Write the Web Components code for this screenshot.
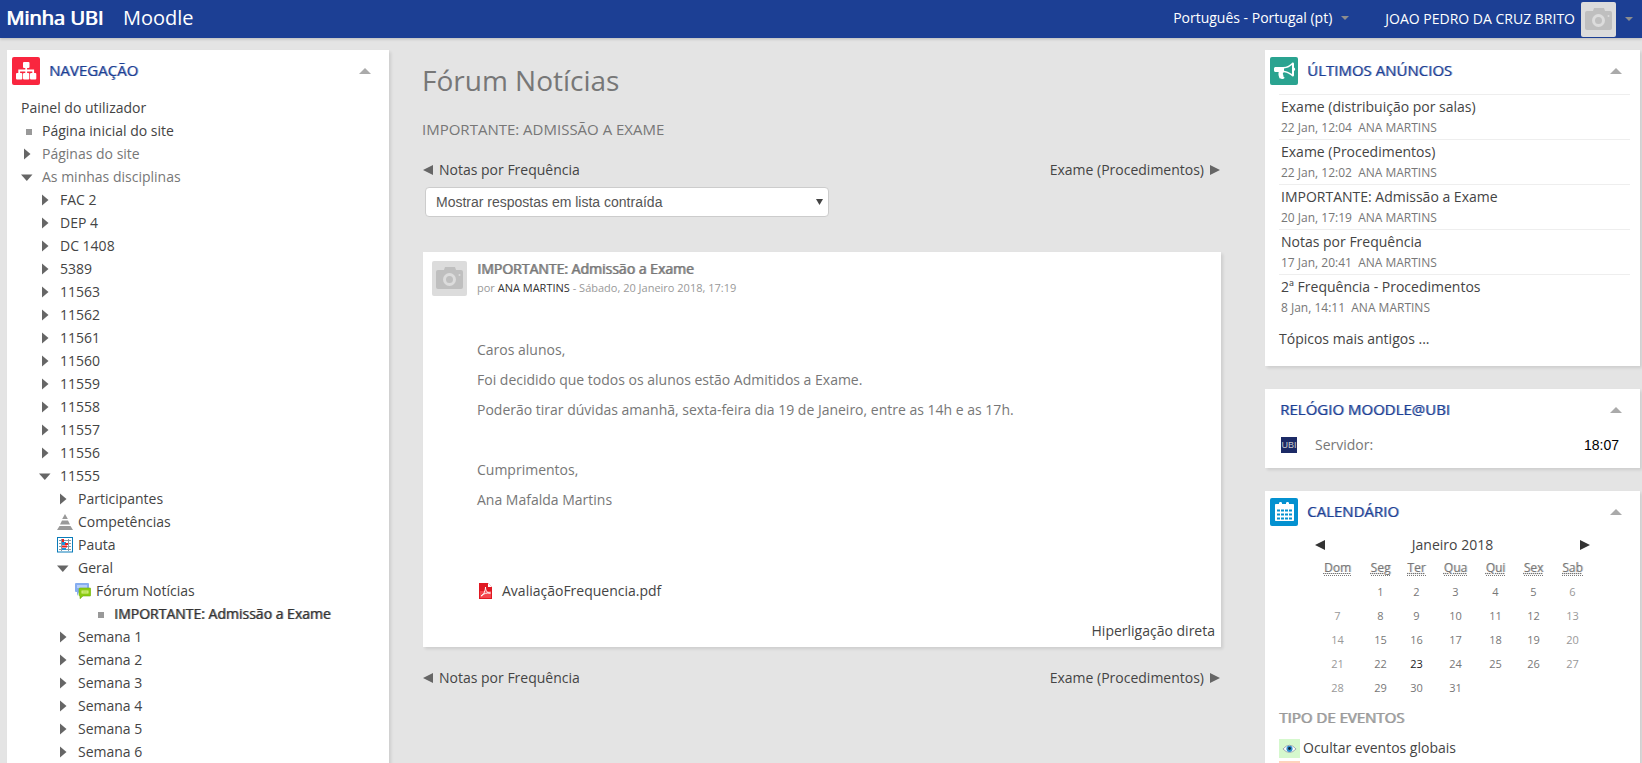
<!DOCTYPE html>
<html lang="pt">
<head>
<meta charset="utf-8">
<title>Fórum Notícias</title>
<style>
  html { height: 100%; }
  body { margin: 0; height: 100%; overflow: hidden; background: #e4e4e4; color: #777; font: 14px/20px "Open Sans", sans-serif; }
</style>
</head>
<body>
<moodle-page>
  <moodle-navbar slot="top"></moodle-navbar>
  <moodle-block slot="left" heading="Navegação" icon="sitemap"><nav-tree></nav-tree></moodle-block>
  <forum-discussion slot="main"></forum-discussion>
  <moodle-block slot="right" heading="Últimos anúncios" icon="bullhorn"><latest-news></latest-news></moodle-block>
  <moodle-block slot="right" heading="Relógio Moodle@UBI"><server-clock></server-clock></moodle-block>
  <moodle-block slot="right" heading="Calendário" icon="calendar"><month-calendar></month-calendar></moodle-block>
</moodle-page>
<script>
const ICONS = {
  sitemap: ['0 0 28 28', `<rect width="28" height="28" rx="2" fill="#f9263f"/><g fill="#fff"><rect x="11" y="5" width="6.500" height="6" rx="1"/><rect x="4" y="16" width="6.300" height="6.500" rx="1"/><rect x="11" y="16" width="6.300" height="6.500" rx="1"/><rect x="18" y="16" width="6.300" height="6.500" rx="1"/></g><path d="M14.200 10v7M7.200 17v-3.500h14V17" fill="none" stroke="#fff" stroke-width="1.800"/>`],
  bullhorn: ['0 0 28 28', `<rect width="28" height="28" rx="2" fill="#2aa390"/><path fill="#fff" fill-rule="evenodd" d="M5.500 10H13c4 0 7-2 9.500-4.500.8 0 1.500.5 1.500 1.300v3.700c1.600.4 1.600 3 0 3.500v4.200c0 .8-.7 1.300-1.500 1.300-2.500-2.300-5-3.900-8.500-4.300-1.500.6-1.400 2-.5 2.900-.6 1 .1 1.900 1.200 2.600-.8 1.700-4.200 1.700-5.300.4C8.800 19 8 17.400 8.700 15H5.500c-.8 0-1.500-.7-1.500-1.500v-2c0-.8.700-1.500 1.500-1.500zM22 8c-2.400 2-4.900 3.200-8 3.500v2.200c3.100.3 5.600 1.600 8 3.400z"/>`],
  calendar: ['0 0 28 28', `<rect width="28" height="28" rx="2" fill="#0491d0"/><path fill="#fff" d="M6 6h3V5C9 3.500 12 3.500 12 5v1h4V5C16 3.500 19 3.500 19 5v1h4c.6 0 1 .4 1 1v15c0 .6-.4 1-1 1H6c-.6 0-1-.4-1-1V7c0-.6.400-1 1-1z"/><path stroke="#0491d0" stroke-width="2" stroke-dasharray="3 1" d="M7 12.500h15M7 16.500h15M7 20.500h15"/>`],
  camera: ['0 0 35 35', `<rect width="35" height="35" rx="2" fill="#dcdcdc"/><path fill="#bfbfbf" d="M6 9h6l1-3h10l1 3h5q2 0 2 2v15q0 2-2 2H6q-2 0-2-2V11q0-2 2-2z"/><circle cx="17.500" cy="18.500" r="5" fill="none" stroke="#dcdcdc" stroke-width="3"/><circle cx="27.500" cy="14" r="1" fill="#dcdcdc"/>`],
  right: ['0 0 16 16', `<path fill="#666" d="M3 2.500 9.500 8 3 13.500z"/>`],
  down: ['0 0 16 16', `<path fill="#666" d="M0 5.500h11.500L5.800 12z"/>`],
  bullet: ['0 0 16 16', `<rect x="5" y="6" width="6" height="6" fill="#999"/>`],
  pyramid: ['0 0 16 16', `<g fill="#999"><path d="M8 0 10.800 5H5.200z"/><path d="M5 6.500h6l2 4H3z"/><path d="M2.500 12h11L16 16H0z"/></g>`],
  grades: ['0 0 16 16', `<rect x=".5" y=".5" width="15" height="14.500" fill="#fff" stroke="#0a7cba"/><path d="M2 3.500h12M2 6.500h12M2 9.500h12M2 12.500h12M4.500 2v12M11.500 2v12" stroke="#8a9aa5"/><path fill="#1f93d8" d="M5 5h4v3H5zM5 11h4v2H5z"/><path fill="#e22" d="M5 2h2v3H5zM8 6h3v2H8zM5 8.500h5v2H5z"/>`],
  forum: ['0 0 16 16', `<path fill="#86adf0" d="M1 0h12q1 0 1 1v7q0 1-1 1H4l-2 4V9H1Q0 9 0 8V1q0-1 1-1z"/><path fill="#b6cffa" d="M2 2h10v3H2z"/><path fill="#8ccc12" stroke="#6fae10" stroke-width=".6" d="M5 5h10q.8 0 .8 1v6q0 1-.8 1H8l-3 2.700V13q-1 0-1-1V6q0-1 1-1z"/><path fill="#d8f08c" d="M6.500 7.500h7v3h-7z"/><path fill="#a6dc30" d="M7.500 8.500h5v1h-5z"/>`],
  pdf: ['0 0 16 16', `<path fill="#e01822" d="M2 0h9l4 4v12H2z"/><path fill="#f4454c" d="M3 8h11v7H3z"/><path fill="#fff" d="M11 0v4h4z"/><path d="M4 13c3-1 4.500-6 4.500-9 0 4 2 6.500 5 6-3.500-.5-7 .5-9.500 3z" fill="none" stroke="#fff"/>`],
  eye: ['0 0 16 16', `<path fill="#fff" stroke="#98a4ac" d="M1 8.500q7-8 14 0-7 7.500-14 0z"/><circle cx="8" cy="8.300" r="3.300" fill="#2f8fd0"/><circle cx="8" cy="8" r="1.500" fill="#123"/>`],
  collapse: ['0 0 12 6', `<path fill="#aaa" d="M6 0l6 6H0z"/>`],
  caret: ['0 0 8 4', `<path fill="#8d8d8d" d="M0 0h8L4 4z"/>`],
  prev: ['0 0 10 10', `<path fill="currentColor" d="M10 0v10L0 5z"/>`],
  next: ['0 0 10 10', `<path fill="currentColor" d="M0 0v10l10-5z"/>`]
};
const icon = (name, w, h = w) => `<svg class="i-${name}" width="${w}" height="${h}" viewBox="${ICONS[name][0]}" aria-hidden="true">${ICONS[name][1]}</svg>`;

const BASE = `*{box-sizing:border-box}a{color:#444;text-decoration:none}svg{display:block;flex:none}
h2,h3,p,ul{margin:0;padding:0;font-weight:400}ul{list-style:none}
button{border:0;padding:0;background:none;font:inherit;color:inherit}.strong{text-shadow:1px 0 0 currentColor}`;

function define(name, css, render) {
  customElements.define(name, class extends HTMLElement {
    connectedCallback() {
      if (this.shadowRoot) return;
      this.attachShadow({ mode: 'open' }).innerHTML = `<style>${BASE}:host{display:block}${css}</style>${render(this)}`;
    }
  });
}

define('moodle-page', `
  .cols{display:grid;grid-template-columns:382fr 810fr 375fr;column-gap:33px;align-items:start;padding:12px 2px 0 7px}
  main{padding-right:11px;min-width:0}
  .right{display:flex;flex-direction:column;gap:23px}
`, () => `<slot name="top"></slot><div class="cols"><aside><slot name="left"></slot></aside><main><slot name="main"></slot></main><aside class="right"><slot name="right"></slot></aside></div>`);

define('moodle-navbar', `
  :host{background:#1c3f94;box-shadow:0 1px 3px rgba(0,0,0,.2)}
  nav{display:flex;align-items:flex-start;height:38px;padding:0 9px 0 6px;color:#fff}
  a{color:#fff}
  .brand{font-size:20px;line-height:36px;margin-right:20px}
  .lang{margin-left:auto;gap:9px;line-height:36px}
  button{display:flex;align-items:center}
  .user{margin-left:36px;gap:6px;height:38px}
  .user .i-caret{margin-left:3px}
`, () => `<nav><a class="brand strong" href="#">Minha UBI</a><a class="brand" href="#">Moodle</a>
  <button class="lang">Português - Portugal (pt) ${icon('caret', 8, 4)}</button>
  <button class="user">JOAO PEDRO DA CRUZ BRITO ${icon('camera', 35)} ${icon('caret', 8, 4)}</button></nav>`);

define('moodle-block', `
  :host{background:#fff;box-shadow:2px 2px 3px rgba(0,0,0,.1)}
  header{display:flex;align-items:center;gap:9px;padding:7px 18px 7px 5px}
  header.plain{padding-left:15px}
  h2{flex:1;font-size:15px;line-height:26px;padding-bottom:2px;color:#1c3f94;text-transform:uppercase;text-shadow:1px 0 0 rgba(28,63,148,.5)}
`, el => {
  const i = el.getAttribute('icon');
  return `<header class="${i ? '' : 'plain'}">${i ? icon(i, 28) : ''}<h2>${el.getAttribute('heading')}</h2><button aria-label="Ocultar bloco">${icon('collapse', 12, 6)}</button></header><slot></slot>`;
});

const TREE = [
  [1, 'bullet', 'Página inicial do site'], [1, 'right', 'Páginas do site', 'muted'], [1, 'down', 'As minhas disciplinas', 'muted'],
  ...['FAC 2', 'DEP 4', 'DC 1408', '5389', '11563', '11562', '11561', '11560', '11559', '11558', '11557', '11556'].map(t => [2, 'right', t]),
  [2, 'down', '11555'], [3, 'right', 'Participantes'], [3, 'pyramid', 'Competências'], [3, 'grades', 'Pauta'], [3, 'down', 'Geral'],
  [4, 'forum', 'Fórum Notícias'], [5, 'bullet', 'IMPORTANTE: Admissão a Exame', 'current'],
  ...[1, 2, 3, 4, 5, 6].map(n => [3, 'right', 'Semana ' + n])
];
define('nav-tree', `
  :host{padding:4px 14px 14px}
  li{display:flex;align-items:center;gap:5px;line-height:23px}
  .d1{padding-left:0}.d2{padding-left:18px}.d3{padding-left:36px}.d4{padding-left:54px}.d5{padding-left:72px}
  .muted{color:#777}
  .current{color:#333;text-shadow:1px 0 0 rgba(51,51,51,.6)}
`, () => `<nav aria-label="Navegação"><ul><li><a href="#">Painel do utilizador</a></li>
  ${TREE.map(([d, m, t, c = '']) => `<li class="d${d}">${icon(m, 16)}${c === 'muted' ? `<span class="muted">${t}</span>` : `<a class="${c}" href="#">${t}</a>`}</li>`).join('')}</ul></nav>`);

define('discussion-nav', `
  :host{display:flex;justify-content:space-between;line-height:20px}
  a{display:flex;align-items:center;gap:6px}
  svg{color:#666}
`, () => `<a href="#">${icon('prev', 10)}Notas por Frequência</a><a href="#">Exame (Procedimentos)${icon('next', 10)}</a>`);

define('forum-discussion', `
  h2{font-size:28px;line-height:40px;padding-top:10px}
  h3{font-size:15px;line-height:22px;text-transform:uppercase;margin:18px 0 20px}
  discussion-nav{padding:0 1px}
  select{display:block;width:100%;height:30px;padding:0 10px;border:1px solid #ccc;border-radius:4px;appearance:none;background:#fff;color:#555;font:14px/20px "Liberation Sans",sans-serif}
  .pick{position:relative;width:404px;margin:7px 3px 35px}
  .pick svg{position:absolute;right:6px;top:12px}
  forum-post{margin-bottom:21px}
`, () => `<h2>Fórum Notícias</h2><h3>Importante: Admissão a Exame</h3><discussion-nav></discussion-nav>
  <div class="pick"><select aria-label="Modo de visualização"><option>Mostrar respostas em lista contraída</option></select><svg width="7" height="6" viewBox="0 0 7 6" fill="#444"><path d="M0 0h7L3.500 6z"/></svg></div>
  <forum-post></forum-post><discussion-nav></discussion-nav>`);

define('forum-post', `
  :host{background:#fff;box-shadow:2px 2px 3px rgba(0,0,0,.1);margin-left:1px}
  header{display:flex;gap:10px;padding:9px 9px 0}
  h3{font-size:14px;line-height:20px;margin-top:-2px;text-shadow:1px 0 0 rgba(119,119,119,.8)}
  .by{font-size:11px;line-height:16px;color:#999;margin-top:1px}
  .by a{color:#333}
  .body{padding:44px 54px 0}
  .body p{line-height:20px;min-height:20px;margin-bottom:10px}
  .file{display:flex;align-items:center;gap:9px;margin-top:71px;line-height:20px}
  footer{text-align:right;line-height:20px;padding:20px 6px 6px}
`, () => `<header>${icon('camera', 35)}<div><h3>IMPORTANTE: Admissão a Exame</h3><p class="by">por <a href="#">ANA MARTINS</a> - Sábado, 20 Janeiro 2018, 17:19</p></div></header>
  <div class="body"><p>Caros alunos,</p><p>Foi decidido que todos os alunos estão Admitidos a Exame.</p><p>Poderão tirar dúvidas amanhã, sexta-feira dia 19 de Janeiro, entre as 14h e as 17h.</p><p></p><p>Cumprimentos,</p><p>Ana Mafalda Martins</p>
  <a class="file" href="#">${icon('pdf', 16)}AvaliaçãoFrequencia.pdf</a></div><footer><a href="#">Hiperligação direta</a></footer>`);

const NEWS = [['Exame (distribuição por salas)', '22 Jan, 12:04'], ['Exame (Procedimentos)', '22 Jan, 12:02'], ['IMPORTANTE: Admissão a Exame', '20 Jan, 17:19'], ['Notas por Frequência', '17 Jan, 20:41'], ['2ª Frequência - Procedimentos', '8 Jan, 14:11']];
define('latest-news', `
  :host{padding:2px 10px 7px 14px}
  li{height:45px;border-top:1px solid #eee;padding:2px 2px 0}
  li a{display:block;line-height:20px}
  .meta{font-size:12px;line-height:22px;white-space:pre}
  .older{display:block;line-height:20px;margin:10px 0}
`, () => `<ul>${NEWS.map(([t, d]) => `<li><a href="#">${t}</a><div class="meta">${d}  ANA MARTINS</div></li>`).join('')}</ul><a class="older" href="#">Tópicos mais antigos ...</a>`);

define('server-clock', `
  :host{display:flex;align-items:center;padding:4px 21px 13px 16px;line-height:20px}
  .logo{width:16px;height:16px;background:#1c2a66;color:#ccc;font:9px/16px "Liberation Sans",sans-serif;text-align:center;margin-right:18px}
  time{margin-left:auto;color:#000;font:14px/20px "Liberation Sans",sans-serif}
`, () => `<span class="logo">UBI</span><span>Servidor:</span><time>18:07</time>`);

const DAYS = [['Dom', 46], ['Seg', 40], ['Ter', 32], ['Qua', 46], ['Qui', 34], ['Sex', 42], ['Sab', 36]];
const weeks = () => [0, 1, 2, 3, 4].map(w => '<tr>' + DAYS.map((_, d) => {
  const n = w * 7 + d;
  return `<td class="${n === 23 ? 'today' : d % 6 ? '' : 'off'}">${n > 0 && n < 32 ? n : ''}</td>`;
}).join('') + '</tr>').join('');
define('month-calendar', `
  :host{padding:0 14px 14px}
  .month{display:flex;justify-content:space-between;align-items:center;width:276px;margin:0 auto;line-height:23px;color:#444}
  .month a{color:#333}
  table{width:276px;margin:0 auto;table-layout:fixed;border-collapse:collapse;font-size:11px;text-align:center}
  th,td{padding:0;height:24px;line-height:24px;font-weight:400}
  th{font-size:12px;text-shadow:1px 0 0 rgba(119,119,119,.4)}
  abbr{display:inline-block;line-height:15px;text-decoration:underline dotted;border-bottom:1px dotted #777}
  .off{color:#999}.today{color:#222}
  h3{font-size:15px;line-height:24px;margin:5px 0 8px;color:#999;text-shadow:1px 0 0 rgba(153,153,153,.8)}
  .event{display:flex;align-items:center;gap:3px;height:22px;line-height:20px}
  .swatch{display:flex;align-items:center;justify-content:center;width:21px;height:19px;background:#d5f8cd}
  .course{background:#ffd3bd}
`, () => `<div class="month"><a href="#" aria-label="Mês anterior">${icon('prev', 10)}</a><span>Janeiro 2018</span><a href="#" aria-label="Mês seguinte">${icon('next', 10)}</a></div>
  <table><colgroup>${DAYS.map(d => `<col style="width:${d[1]}px">`).join('')}</colgroup><thead><tr>${DAYS.map(d => `<th scope="col"><abbr>${d[0]}</abbr></th>`).join('')}</tr></thead><tbody>${weeks()}</tbody></table>
  <h3>TIPO DE EVENTOS</h3>
  <a class="event" href="#"><span class="swatch">${icon('eye', 15)}</span>Ocultar eventos globais</a>
  <a class="event" href="#" aria-label="Eventos de disciplina"><span class="swatch course"></span></a>`);
</script>
</body>
</html>
